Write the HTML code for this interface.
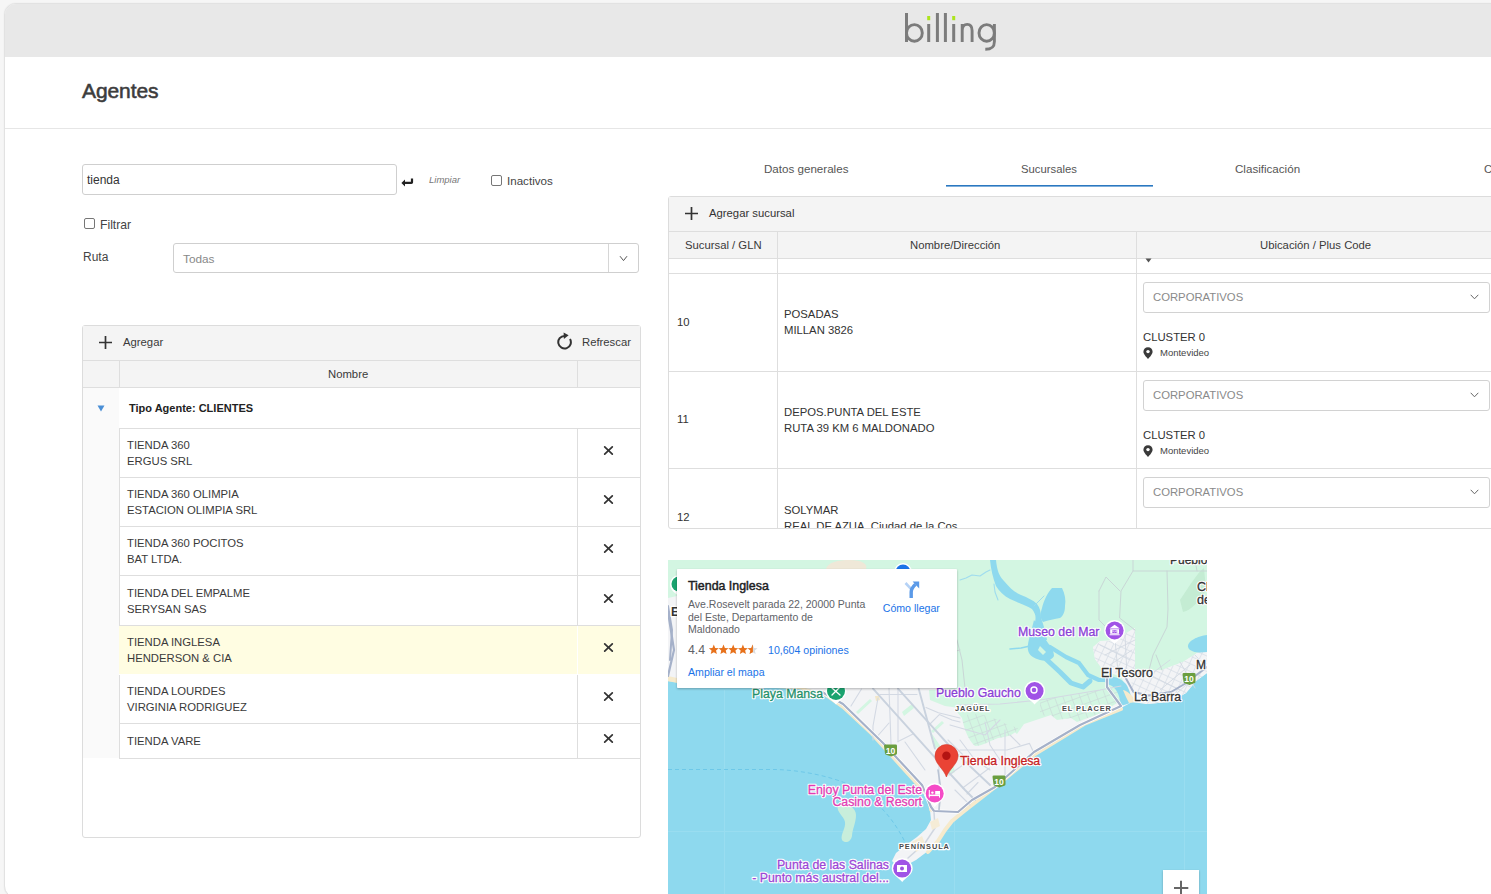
<!DOCTYPE html>
<html><head><meta charset="utf-8">
<style>
*{box-sizing:border-box;margin:0;padding:0}
html,body{width:1491px;height:894px;overflow:hidden;background:#f6f6f6;font-family:"Liberation Sans",sans-serif;color:#3a3a3a}
.a{position:absolute}
#frame{position:absolute;left:4px;top:3px;width:1500px;height:895px;background:#fff;border:1px solid #e2e2e2;border-radius:12px;overflow:hidden;box-shadow:0 0 1.5px rgba(0,0,0,0.08)}
#topbar{position:absolute;left:0;top:0;width:100%;height:53px;background:#e8e8e8}
#hline{position:absolute;left:0;top:124px;width:100%;height:1px;background:#e6e6e6}
.t12{font-size:11.3px;line-height:16px;white-space:nowrap}
.inp{border:1px solid #cfcfcf;border-radius:3px;background:#fff}
.cb{width:11px;height:11px;border:1px solid #767676;border-radius:2px;background:#fff}
.tbl{border:1px solid #dcdcdc;border-radius:3px;background:#fff;overflow:hidden}
.gl{background:#dedede}
</style></head><body>
<div id="frame">
  <div id="topbar"></div>
  <div id="hline"></div>
</div>
<!-- logo -->
<div class="a" style="left:904px;top:12px;width:94px;height:40px" id="logo"><svg style="position:absolute;left:-4px;top:-4px" width="100" height="48" viewBox="0 0 100 48"><g fill="#7c7c7c"><rect x="5" y="5" width="3" height="29"/><rect x="27.2" y="16" width="3" height="18"/><rect x="35.9" y="5" width="3" height="29"/><rect x="43.9" y="5" width="3" height="29"/><rect x="52.2" y="16" width="3" height="18"/></g><g fill="none" stroke="#7c7c7c" stroke-width="2.9"><ellipse cx="14.4" cy="24.9" rx="7.9" ry="8.3"/><path d="M62.2 34V16M62.2 22.8C62.2 18.6 64.4 16.4 67.2 16.4S72.1 18.6 72.1 22.8V34"/><ellipse cx="86.7" cy="24.9" rx="7.7" ry="8.3"/><path d="M94.4 16V33.5C94.4 39.6 91.2 41.3 85.3 41.3"/></g><g fill="#ace41c"><rect x="27.2" y="8" width="3" height="4.2"/><rect x="52.2" y="8" width="3" height="4.2"/></g></svg>
</div>

<div class="a" style="left:82px;top:79px;font-size:21px;color:#3c3c3c;-webkit-text-stroke:0.55px #3c3c3c;letter-spacing:-0.1px">Agentes</div>

<!-- search -->
<div class="a inp" style="left:82px;top:164px;width:315px;height:31px"></div>
<div class="a t12" style="left:87px;top:172px;color:#333;font-size:12px">tienda</div>
<svg class="a" style="left:401px;top:178px" width="13" height="9" viewBox="0 0 13 9"><path d="M0.4 4.9L4 1.4V3.7H9.9V0.4H12.1V4.3C12.1 5.3 11.4 6 10.4 6H4V8.4Z" fill="#222"/></svg>
<div class="a" style="left:429px;top:174px;font-size:9.5px;font-style:italic;color:#777">Limpiar</div>
<div class="a cb" style="left:491px;top:175px"></div>
<div class="a t12" style="left:507px;top:173px;color:#444;font-size:11.6px">Inactivos</div>

<div class="a cb" style="left:84px;top:218px"></div>
<div class="a t12" style="left:100px;top:217px;color:#444;font-size:12.2px">Filtrar</div>

<div class="a t12" style="left:83px;top:249px;color:#444;font-size:12px">Ruta</div>
<div class="a inp" style="left:173px;top:243px;width:466px;height:30px"></div>
<div class="a" style="left:608px;top:244px;width:1px;height:28px;background:#d6d6d6"></div>
<div class="a t12" style="left:183px;top:251px;color:#888;font-size:11.8px">Todas</div>
<svg class="a" style="left:619px;top:255px" width="9" height="7" viewBox="0 0 9 7"><path d="M1 1.2L4.5 5.6 8 1.2" fill="none" stroke="#555" stroke-width="1"/></svg>

<!-- left table -->
<div class="a tbl" style="left:82px;top:325px;width:559px;height:513px"></div>
<div class="a" style="left:83px;top:326px;width:557px;height:35px;background:#f4f4f4;border-bottom:1px solid #dedede"></div>
<div class="a" style="left:83px;top:361px;width:557px;height:27px;background:#f4f4f4;border-bottom:1px solid #dedede"></div>
<div class="a gl" style="left:119px;top:360px;width:1px;height:27px"></div>
<div class="a gl" style="left:577px;top:360px;width:1px;height:27px"></div>
<div class="a" style="left:83px;top:388px;width:36px;height:370px;background:#fafafa"></div>
<svg class="a" style="left:98px;top:335px" width="15" height="15" viewBox="0 0 15 15"><path d="M7.5 1v13M1 7.5h13" stroke="#333" stroke-width="1.7"/></svg>
<div class="a t12 tb" style="left:123px;top:334px">Agregar</div>
<svg class="a" style="left:556px;top:332px" width="17" height="18" viewBox="0 0 17 18"><path d="M8.5 3.9A6.3 6.3 0 1 0 14 7" fill="none" stroke="#333" stroke-width="2"/><path d="M7.6 0.6L12.6 3.3 7.9 7z" fill="#333"/></svg>
<div class="a t12 tb" style="left:582px;top:334px">Refrescar</div>
<div class="a t12 tb" style="left:328px;top:366px">Nombre</div>
<svg class="a" style="left:97px;top:405px" width="8" height="7" viewBox="0 0 8 7"><path d="M0.5 0.5h7L4 6.5z" fill="#4a8fd6"/></svg>
<div class="a t12" style="left:129px;top:400px;font-weight:bold;font-size:11px;color:#222">Tipo Agente: CLIENTES</div>
<div class="a gl" style="left:119px;top:428px;width:521px;height:1px"></div>
<div class="a" style="left:120px;top:429px;width:520px;height:48px;background:#fff"></div>
<div class="a gl" style="left:119px;top:428px;width:1px;height:50px"></div>
<div class="a gl" style="left:577px;top:428px;width:1px;height:50px"></div>
<div class="a gl" style="left:119px;top:477px;width:521px;height:1px"></div>
<div class="a t12 rc" style="left:127px;top:437px">TIENDA 360<br>ERGUS SRL</div>
<svg class="a" style="left:603px;top:445.2px" width="11" height="11" viewBox="0 0 11 11"><path d="M1.7 1.9L9.3 9.1M9.3 1.9L1.7 9.1" stroke="#333" stroke-width="1.75" stroke-linecap="round"/></svg>
<div class="a" style="left:120px;top:478px;width:520px;height:48px;background:#fff"></div>
<div class="a gl" style="left:119px;top:477px;width:1px;height:50px"></div>
<div class="a gl" style="left:577px;top:477px;width:1px;height:50px"></div>
<div class="a gl" style="left:119px;top:526px;width:521px;height:1px"></div>
<div class="a t12 rc" style="left:127px;top:486px">TIENDA 360 OLIMPIA<br>ESTACION OLIMPIA SRL</div>
<svg class="a" style="left:603px;top:494.2px" width="11" height="11" viewBox="0 0 11 11"><path d="M1.7 1.9L9.3 9.1M9.3 1.9L1.7 9.1" stroke="#333" stroke-width="1.75" stroke-linecap="round"/></svg>
<div class="a" style="left:120px;top:527px;width:520px;height:48px;background:#fff"></div>
<div class="a gl" style="left:119px;top:526px;width:1px;height:50px"></div>
<div class="a gl" style="left:577px;top:526px;width:1px;height:50px"></div>
<div class="a gl" style="left:119px;top:575px;width:521px;height:1px"></div>
<div class="a t12 rc" style="left:127px;top:535px">TIENDA 360 POCITOS<br>BAT LTDA.</div>
<svg class="a" style="left:603px;top:543.2px" width="11" height="11" viewBox="0 0 11 11"><path d="M1.7 1.9L9.3 9.1M9.3 1.9L1.7 9.1" stroke="#333" stroke-width="1.75" stroke-linecap="round"/></svg>
<div class="a" style="left:120px;top:576px;width:520px;height:49px;background:#fff"></div>
<div class="a gl" style="left:119px;top:575px;width:1px;height:51px"></div>
<div class="a gl" style="left:577px;top:575px;width:1px;height:51px"></div>
<div class="a gl" style="left:119px;top:625px;width:521px;height:1px"></div>
<div class="a t12 rc" style="left:127px;top:585px">TIENDA DEL EMPALME<br>SERYSAN SAS</div>
<svg class="a" style="left:603px;top:592.7px" width="11" height="11" viewBox="0 0 11 11"><path d="M1.7 1.9L9.3 9.1M9.3 1.9L1.7 9.1" stroke="#333" stroke-width="1.75" stroke-linecap="round"/></svg>
<div class="a" style="left:119px;top:626px;width:521px;height:48px;background:#fffde2"></div>
<div class="a" style="left:577px;top:626px;width:1px;height:48px;background:#fff"></div>
<div class="a" style="left:119px;top:674px;width:521px;height:1px;background:#fff"></div>
<div class="a t12 rc" style="left:127px;top:634px">TIENDA INGLESA<br>HENDERSON &amp; CIA</div>
<svg class="a" style="left:603px;top:642.2px" width="11" height="11" viewBox="0 0 11 11"><path d="M1.7 1.9L9.3 9.1M9.3 1.9L1.7 9.1" stroke="#333" stroke-width="1.75" stroke-linecap="round"/></svg>
<div class="a" style="left:120px;top:675px;width:520px;height:48px;background:#fff"></div>
<div class="a gl" style="left:119px;top:675px;width:1px;height:49px"></div>
<div class="a gl" style="left:577px;top:675px;width:1px;height:49px"></div>
<div class="a gl" style="left:119px;top:723px;width:521px;height:1px"></div>
<div class="a t12 rc" style="left:127px;top:683px">TIENDA LOURDES<br>VIRGINIA RODRIGUEZ</div>
<svg class="a" style="left:603px;top:691.2px" width="11" height="11" viewBox="0 0 11 11"><path d="M1.7 1.9L9.3 9.1M9.3 1.9L1.7 9.1" stroke="#333" stroke-width="1.75" stroke-linecap="round"/></svg>
<div class="a" style="left:120px;top:724px;width:520px;height:34px;background:#fff"></div>
<div class="a gl" style="left:119px;top:723px;width:1px;height:36px"></div>
<div class="a gl" style="left:577px;top:723px;width:1px;height:36px"></div>
<div class="a gl" style="left:119px;top:758px;width:521px;height:1px"></div>
<div class="a t12 rc" style="left:127px;top:733px">TIENDA VARE</div>
<svg class="a" style="left:603px;top:733.2px" width="11" height="11" viewBox="0 0 11 11"><path d="M1.7 1.9L9.3 9.1M9.3 1.9L1.7 9.1" stroke="#333" stroke-width="1.75" stroke-linecap="round"/></svg>

<!-- tabs -->
<div class="a t12" style="left:764px;top:161px;color:#555;font-size:11.6px">Datos generales</div>
<div class="a t12" style="left:1021px;top:161px;color:#555">Sucursales</div>
<div class="a t12" style="left:1235px;top:161px;color:#555;font-size:11.6px">Clasificación</div>
<div class="a t12" style="left:1484px;top:161px;color:#555">C</div>
<div class="a" style="left:946px;top:185px;width:207px;height:1px;background:#2b78c0"></div><div class="a" style="left:946px;top:186px;width:207px;height:1px;background:#7eaedb"></div>

<!-- right table -->
<div class="a tbl" style="left:668px;top:196px;width:900px;height:333px"></div>
<div class="a" style="left:0;top:0;width:1491px;height:528px;overflow:hidden">
<div class="a" style="left:669px;top:197px;width:830px;height:61px;background:#f4f4f4"></div>
<div class="a" style="left:669px;top:231px;width:830px;height:1px;background:#dedede"></div>
<div class="a" style="left:669px;top:258px;width:830px;height:1px;background:#dedede"></div>
<div class="a" style="left:777px;top:232px;width:1px;height:26px;background:#dedede"></div>
<div class="a" style="left:1136px;top:232px;width:1px;height:26px;background:#dedede"></div>
<svg class="a" style="left:684px;top:206px" width="15" height="15" viewBox="0 0 15 15"><path d="M7.5 1v13M1 7.5h13" stroke="#333" stroke-width="1.7"/></svg>
<div class="a t12" style="left:709px;top:205px;color:#333">Agregar sucursal</div>
<div class="a t12" style="left:685px;top:237px;color:#3a3a3a">Sucursal / GLN</div>
<div class="a t12" style="left:910px;top:237px;color:#3a3a3a">Nombre/Dirección</div>
<div class="a t12" style="left:1260px;top:237px;color:#3a3a3a">Ubicación / Plus Code</div>
<div class="a" style="left:777px;top:258px;width:1px;height:270px;background:#dedede"></div>
<div class="a" style="left:1136px;top:258px;width:1px;height:270px;background:#dedede"></div>
<div class="a" style="left:669px;top:273px;width:830px;height:1px;background:#dedede"></div>
<svg class="a" style="left:1145px;top:258px" width="7" height="5" viewBox="0 0 7 5"><path d="M0.5 0.5h6L3.5 4.5z" fill="#555"/></svg>
<div class="a" style="left:669px;top:371px;width:830px;height:1px;background:#dedede"></div>
<div class="a t12" style="left:677px;top:314px;color:#333">10</div>
<div class="a t12" style="left:784px;top:306px;color:#333">POSADAS<br>MILLAN 3826</div>
<div class="a inp" style="left:1143px;top:282px;width:347px;height:31px;border-color:#d2d2d2"></div>
<div class="a t12" style="left:1153px;top:289px;color:#8a8a8a">CORPORATIVOS</div>
<svg class="a" style="left:1470px;top:294px" width="9" height="6" viewBox="0 0 9 6"><path d="M0.7 0.8L4.5 4.8 8.3 0.8" fill="none" stroke="#666" stroke-width="1"/></svg>
<div class="a t12" style="left:1143px;top:329px;color:#333">CLUSTER 0</div>
<svg class="a" style="left:1143px;top:347px" width="10" height="12" viewBox="0 0 10 12"><path d="M5 0.3C2.3 0.3 0.4 2.2 0.4 4.7 0.4 7.6 5 11.8 5 11.8S9.6 7.6 9.6 4.7C9.6 2.2 7.7 0.3 5 0.3z" fill="#3a3a3a"/><circle cx="5" cy="4.6" r="1.7" fill="#fff"/></svg>
<div class="a" style="left:1160px;top:346px;font-size:9.5px;line-height:14px;color:#444;white-space:nowrap">Montevideo</div>
<div class="a" style="left:669px;top:468px;width:830px;height:1px;background:#dedede"></div>
<div class="a t12" style="left:677px;top:411px;color:#333">11</div>
<div class="a t12" style="left:784px;top:404px;color:#333">DEPOS.PUNTA DEL ESTE<br>RUTA 39 KM 6 MALDONADO</div>
<div class="a inp" style="left:1143px;top:380px;width:347px;height:31px;border-color:#d2d2d2"></div>
<div class="a t12" style="left:1153px;top:387px;color:#8a8a8a">CORPORATIVOS</div>
<svg class="a" style="left:1470px;top:392px" width="9" height="6" viewBox="0 0 9 6"><path d="M0.7 0.8L4.5 4.8 8.3 0.8" fill="none" stroke="#666" stroke-width="1"/></svg>
<div class="a t12" style="left:1143px;top:427px;color:#333">CLUSTER 0</div>
<svg class="a" style="left:1143px;top:445px" width="10" height="12" viewBox="0 0 10 12"><path d="M5 0.3C2.3 0.3 0.4 2.2 0.4 4.7 0.4 7.6 5 11.8 5 11.8S9.6 7.6 9.6 4.7C9.6 2.2 7.7 0.3 5 0.3z" fill="#3a3a3a"/><circle cx="5" cy="4.6" r="1.7" fill="#fff"/></svg>
<div class="a" style="left:1160px;top:444px;font-size:9.5px;line-height:14px;color:#444;white-space:nowrap">Montevideo</div>
<div class="a t12" style="left:677px;top:509px;color:#333">12</div>
<div class="a t12" style="left:784px;top:502px;color:#333">SOLYMAR<br>REAL DE AZUA, Ciudad de la Cos</div>
<div class="a inp" style="left:1143px;top:477px;width:347px;height:31px;border-color:#d2d2d2"></div>
<div class="a t12" style="left:1153px;top:484px;color:#8a8a8a">CORPORATIVOS</div>
<svg class="a" style="left:1470px;top:489px" width="9" height="6" viewBox="0 0 9 6"><path d="M0.7 0.8L4.5 4.8 8.3 0.8" fill="none" stroke="#666" stroke-width="1"/></svg>
<div class="a t12" style="left:1143px;top:524px;color:#333">CLUSTER 0</div>
<svg class="a" style="left:1143px;top:542px" width="10" height="12" viewBox="0 0 10 12"><path d="M5 0.3C2.3 0.3 0.4 2.2 0.4 4.7 0.4 7.6 5 11.8 5 11.8S9.6 7.6 9.6 4.7C9.6 2.2 7.7 0.3 5 0.3z" fill="#3a3a3a"/><circle cx="5" cy="4.6" r="1.7" fill="#fff"/></svg>
<div class="a" style="left:1160px;top:541px;font-size:9.5px;line-height:14px;color:#444;white-space:nowrap">Montevideo</div>
</div>

<!-- map -->
<div class="a" style="left:668px;top:560px;width:539px;height:334px;background:#8fd9ec;overflow:hidden" id="map"><svg width="539" height="334" viewBox="668 560 539 334" style="position:absolute;left:0;top:0">
<rect x="668" y="560" width="539" height="334" fill="#8ed9ee"/>
<path d="M724.5 690V894M668 831.5H1207M954.5 820V894M1184.5 700V894" stroke="#9ee0f2" stroke-width="1" opacity="0.7"/>
<path d="M668 560 L1207 560 L1207 673 L1196 681 L1186 693 L1170 702 L1146 704 L1132 702 L1121 708 L1084 723 L1035 753 L995 786 L963 811 L952 820 L945 829 L938 840 L928 851 L916 860 L905 866 L897 866 L892 861 L896 853 L906 845 L917 837 L926 829 L931 820 L930 810 L928 797 L920 786 L900 764 L872 733 L843 706 L826 694 L800 687 L760 685 L720 683 L690 681 L668 679Z" fill="#f3f4f6"/>
<path d="M826 695 L843 707 L872 734 L900 765 L920 787 L929 798 L931 810" fill="none" stroke="#f6eacc" stroke-width="3.5" stroke-linejoin="round" stroke-linecap="round" />
<path d="M1121 709 L1084 724 L1035 754 L995 787 L963 812 L952 821 L945 830 L938 841 L928 852" fill="none" stroke="#f6eacc" stroke-width="4" stroke-linejoin="round" stroke-linecap="round" />
<path d="M668 680 L690 682 L720 684 L760 686 L800 688 L826 695" fill="none" stroke="#f6eacc" stroke-width="2.5" stroke-linejoin="round" stroke-linecap="round" />
<path d="M668 560 L1207 560 L1207 650 L1197 653 L1183 662 L1162 670 L1135 671 L1135 628 L1114 640 L1100 641 L1093 647 L1095 659 L1103 670 L1121 677 L1128 690 L1121 700 L1104 712 L1077 722 L1071 718 L1057 720 L1051 715 L1024 724 L1017 734 L1004 723 L986 733 L977 745 L966 723 L957 712 L957 690 L940 688 L940 569 L677 569 L677 597 L668 599Z" fill="#d3f6e2"/>
<defs><pattern id="grid" width="7" height="7" patternUnits="userSpaceOnUse" patternTransform="rotate(25)"><path d="M0 0.5H7M0.5 0V7" stroke="#d6dce5" stroke-width="0.7"/></pattern><pattern id="grid2" width="8" height="8" patternUnits="userSpaceOnUse" patternTransform="rotate(-20)"><path d="M0 0.5H8M0.5 0V8" stroke="#c9d6d6" stroke-width="0.6"/></pattern></defs>
<path d="M1040 700 L1100 690 L1120 686 L1121 700 L1104 712 L1077 722 L1071 718 L1057 720 L1051 715 L1040 716Z" fill="url(#grid2)"/>
<path d="M962 718 C966 712 985 712 1004 723 L1018 728 C1016 734 1008 737 998 738 C990 741 982 746 975 746 C968 740 964 728 962 718Z" fill="#d3f6e2"/>
<path d="M962 718 C966 712 985 712 1004 723 L1018 728 C1016 734 1008 737 998 738 C990 741 982 746 975 746 C968 740 964 728 962 718Z" fill="url(#grid2)"/>
<path d="M668 598 L677 596 L677 682 L668 680Z" fill="#f3f4f6"/>
<path d="M668 676 L677 678 L677 683 L668 681Z" fill="#f6eacc"/>
<path d="M668 606 L672 630 L670 660" fill="none" stroke="#a5b1c9" stroke-width="2" stroke-linejoin="round" stroke-linecap="round" />
<path d="M826 569 C828 562 838 560 850 560 C862 560 868 564 866 569Z" fill="#efe8d8"/>
<path d="M902 712 L912 704 L914 708 L904 716Z" fill="#d3f6e2"/>
<path d="M944 760 L950 752 L955 772 L948 776Z" fill="#d3f6e2"/>
<path d="M838 806 C845 803 856 806 856 815 C856 823 852 830 852 836 C851 842 845 844 842 840 C840 835 846 828 845 822 C844 816 836 812 838 806Z" fill="#c8eedb"/>
<path d="M668 769.5 L775 769.5 C800 770 830 776 850 785 C870 795 890 812 905 842" fill="none" stroke="#5fc1e6" stroke-width="1" stroke-dasharray="4 3" opacity="0.7"/>
<path d="M1093 647 L1100 642 L1114 640 L1135 628 L1135 675 L1125 675 L1103 670 L1095 659Z" fill="#f3f4f6"/>
<path d="M1135 671 L1162 670 L1183 662 L1197 653 L1207 650 L1207 673 L1196 681 L1186 693 L1170 702 L1146 704 L1136 700 L1130 688Z" fill="#f3f4f6"/>
<path d="M1093 647 L1100 642 L1114 640 L1135 628 L1135 675 L1125 675 L1103 670 L1095 659Z" fill="url(#grid)"/>
<path d="M1135 671 L1162 670 L1183 662 L1197 653 L1207 650 L1207 673 L1196 681 L1186 693 L1170 702 L1146 704 L1136 700 L1130 688Z" fill="url(#grid)"/>
<path d="M1207 635 C1198 636 1187 641 1188 647 C1190 653 1200 653 1207 652Z" fill="#8ed9ee"/>
<path d="M1180 600 C1190 585 1198 572 1204 568 L1206 590 C1200 600 1192 610 1183 612Z" fill="#c4ecd3"/>
<path d="M990 560 L996 560 C997 570 999 576 1004 581 C1010 588 1014 592 1021 595 C1028 598 1033 600 1037 604 C1040 608 1041 612 1041 618 C1043 624 1046 632 1047 640 L1032 640 C1031 632 1033 626 1035 622 C1036 618 1036 614 1032 609 C1026 605 1018 603 1010 599 C1004 596 999 591 996 586 C993 578 991 570 990 560Z" fill="#8ed9ee"/>
<path d="M1052 588 L1062 588 C1065 594 1066 600 1065 606 C1065 612 1063 616 1060 618 C1055 619 1048 620 1043 622 C1040 618 1040 614 1042 608 C1044 600 1048 592 1052 588Z" fill="#8ed9ee"/>
<path d="M1034 620 C1038 626 1044 634 1046 640 C1050 646 1054 650 1054 656 C1052 660 1046 662 1040 660 C1034 658 1029 656 1028 650 C1027 644 1030 636 1032 628Z" fill="#8ed9ee"/>
<path d="M1050 647 L1066 657 L1079 663 L1088 675 L1099 680 L1111 680 L1117 680 L1122 686 L1124 694 L1126 702" fill="none" stroke="#8ed9ee" stroke-width="4.2" stroke-linejoin="round" stroke-linecap="round" />
<path d="M1046 659 L1060 672 L1071 683 L1083 687 L1090 681" fill="none" stroke="#8ed9ee" stroke-width="5" stroke-linejoin="round" stroke-linecap="round" />
<path d="M1010 649 L1021 648 L1030 646" fill="none" stroke="#8ed9ee" stroke-width="1.6" stroke-linejoin="round" stroke-linecap="round" />
<path d="M1106 677 C1112 676 1120 677 1126 684 C1130 690 1131 697 1133 702 L1121 706 C1120 698 1118 690 1112 686 C1108 684 1104 683 1104 680Z" fill="#8ed9ee"/>
<path d="M1040 646 L1046 652 L1043 655 L1038 650Z" fill="#d3f6e2"/>
<path d="M960 580 L966 578 L972 575 L980 576 L986 572 L990 570" fill="none" stroke="#9fdcee" stroke-width="1.1" stroke-linejoin="round" stroke-linecap="round" />
<path d="M994 584 L995 592 L998 600" fill="none" stroke="#9fdcee" stroke-width="1.1" stroke-linejoin="round" stroke-linecap="round" />
<path d="M1034 606 L1040 600 L1044 596" fill="none" stroke="#9fdcee" stroke-width="1" stroke-linejoin="round" stroke-linecap="round" />
<path d="M856 712 L870 699 L872 701 L858 714Z M931 731 L942 721 L944 723 L933 733Z M930 731 L941 747 L934 748Z M929 690 L960 690 L960 708 L945 706 L930 700Z" fill="#d3f6e2"/>
<path d="M875 696 L879 696 L880 700 L876 701Z" fill="#f3e7c8"/>
<path d="M889 688 L891 744" fill="none" stroke="#d3d9e3" stroke-width="1.1" stroke-linejoin="round" stroke-linecap="round" />
<path d="M898 688 L898 742" fill="none" stroke="#d3d9e3" stroke-width="1.1" stroke-linejoin="round" stroke-linecap="round" />
<path d="M878 698 L873 726 L873 740" fill="none" stroke="#d3d9e3" stroke-width="1.1" stroke-linejoin="round" stroke-linecap="round" />
<path d="M880 694.5 L917 694.5" fill="none" stroke="#d3d9e3" stroke-width="1.1" stroke-linejoin="round" stroke-linecap="round" />
<path d="M851 706 L861.5 689" fill="none" stroke="#d3d9e3" stroke-width="1.1" stroke-linejoin="round" stroke-linecap="round" />
<path d="M878.5 735 L889 723" fill="none" stroke="#d3d9e3" stroke-width="1.1" stroke-linejoin="round" stroke-linecap="round" />
<path d="M898 741.5 L912.5 734.3" fill="none" stroke="#d3d9e3" stroke-width="1.1" stroke-linejoin="round" stroke-linecap="round" />
<path d="M929.5 724.5 L939.3 714.6 L952 720 L960 722" fill="none" stroke="#d3d9e3" stroke-width="1.1" stroke-linejoin="round" stroke-linecap="round" />
<path d="M926 707.5 L938.4 712.8 L960 718" fill="none" stroke="#d3d9e3" stroke-width="1.1" stroke-linejoin="round" stroke-linecap="round" />
<path d="M949 775 L967 762" fill="none" stroke="#d3d9e3" stroke-width="1.1" stroke-linejoin="round" stroke-linecap="round" />
<path d="M962.6 788 L989.5 768" fill="none" stroke="#d3d9e3" stroke-width="1.1" stroke-linejoin="round" stroke-linecap="round" />
<path d="M948 740 L962.6 754.5" fill="none" stroke="#d3d9e3" stroke-width="1.1" stroke-linejoin="round" stroke-linecap="round" />
<path d="M939 766 L939 809" fill="none" stroke="#d3d9e3" stroke-width="1.1" stroke-linejoin="round" stroke-linecap="round" />
<path d="M967 794 L978 782.5" fill="none" stroke="#d3d9e3" stroke-width="1.1" stroke-linejoin="round" stroke-linecap="round" />
<path d="M960 740 L975 760 L990 770" fill="none" stroke="#d3d9e3" stroke-width="1.1" stroke-linejoin="round" stroke-linecap="round" />
<path d="M985 722 L990 745 L1000 760" fill="none" stroke="#d3d9e3" stroke-width="1.1" stroke-linejoin="round" stroke-linecap="round" />
<path d="M1010 735 L1020 745" fill="none" stroke="#d3d9e3" stroke-width="1.1" stroke-linejoin="round" stroke-linecap="round" />
<path d="M950 725 L985 735 L1000 720" fill="none" stroke="#d3d9e3" stroke-width="1.1" stroke-linejoin="round" stroke-linecap="round" />
<path d="M958 705 L1000 704 L1040 700 L1100 690 L1121 686" fill="none" stroke="#d3d9e3" stroke-width="1.1" stroke-linejoin="round" stroke-linecap="round" />
<path d="M905 742 L925 770" fill="none" stroke="#d3d9e3" stroke-width="1.1" stroke-linejoin="round" stroke-linecap="round" />
<path d="M955 790 L970 805" fill="none" stroke="#d3d9e3" stroke-width="1.1" stroke-linejoin="round" stroke-linecap="round" />
<path d="M960 750 L1007 750 L1029.5 743.4 L1033 751" fill="none" stroke="#d3d9e3" stroke-width="1.1" stroke-linejoin="round" stroke-linecap="round" />
<path d="M1005 730 L1005 775" fill="none" stroke="#d3d9e3" stroke-width="1.1" stroke-linejoin="round" stroke-linecap="round" />
<path d="M941 811 L959 811.7" fill="none" stroke="#d3d9e3" stroke-width="1.1" stroke-linejoin="round" stroke-linecap="round" />
<path d="M873 688.7 L935 757.6 L965 790 L975 800" fill="none" stroke="#c9d2de" stroke-width="1.9" stroke-linejoin="round" stroke-linecap="round" />
<path d="M898 688.7 L929.5 723.6 L955 752 L990 785" fill="none" stroke="#c9d2de" stroke-width="1.9" stroke-linejoin="round" stroke-linecap="round" />
<path d="M918.7 688.7 L934.9 748.6" fill="none" stroke="#c9d2de" stroke-width="1.9" stroke-linejoin="round" stroke-linecap="round" />
<path d="M1100 645 L1130 660" fill="none" stroke="#d3d9e2" stroke-width="0.9" stroke-linejoin="round" stroke-linecap="round" />
<path d="M1105 655 L1135 640" fill="none" stroke="#d3d9e2" stroke-width="0.9" stroke-linejoin="round" stroke-linecap="round" />
<path d="M1110 665 L1132 650" fill="none" stroke="#d3d9e2" stroke-width="0.9" stroke-linejoin="round" stroke-linecap="round" />
<path d="M1115 640 L1118 672" fill="none" stroke="#d3d9e2" stroke-width="0.9" stroke-linejoin="round" stroke-linecap="round" />
<path d="M1125 635 L1127 675" fill="none" stroke="#d3d9e2" stroke-width="0.9" stroke-linejoin="round" stroke-linecap="round" />
<path d="M1140 670 L1180 690" fill="none" stroke="#d3d9e2" stroke-width="0.9" stroke-linejoin="round" stroke-linecap="round" />
<path d="M1150 675 L1170 660" fill="none" stroke="#d3d9e2" stroke-width="0.9" stroke-linejoin="round" stroke-linecap="round" />
<path d="M1160 690 L1190 665" fill="none" stroke="#d3d9e2" stroke-width="0.9" stroke-linejoin="round" stroke-linecap="round" />
<path d="M1175 695 L1200 672" fill="none" stroke="#d3d9e2" stroke-width="0.9" stroke-linejoin="round" stroke-linecap="round" />
<path d="M1180 662 L1195 688" fill="none" stroke="#d3d9e2" stroke-width="0.9" stroke-linejoin="round" stroke-linecap="round" />
<path d="M1195 655 L1207 668" fill="none" stroke="#d3d9e2" stroke-width="0.9" stroke-linejoin="round" stroke-linecap="round" />
<path d="M1133 560 L1133 571 L1207 571" fill="none" stroke="#c9d6d6" stroke-width="1" stroke-linejoin="round" stroke-linecap="round" />
<path d="M1133 571 L1121 591 L1119.6 618 L1135 630" fill="none" stroke="#c9d6d6" stroke-width="1" stroke-linejoin="round" stroke-linecap="round" />
<path d="M1167 571 L1168 609 L1167 627 L1153 655 L1149 670" fill="none" stroke="#c9d6d6" stroke-width="1" stroke-linejoin="round" stroke-linecap="round" />
<path d="M1099 591 L1106 577 L1120 591" fill="none" stroke="#c9d6d6" stroke-width="1" stroke-linejoin="round" stroke-linecap="round" />
<path d="M1099 591 L1099 620 L1105 626" fill="none" stroke="#c9d6d6" stroke-width="1" stroke-linejoin="round" stroke-linecap="round" />
<path d="M1156 655 L1162 670" fill="none" stroke="#c9d6d6" stroke-width="1" stroke-linejoin="round" stroke-linecap="round" />
<path d="M957 640 L962 660 L965 688" fill="none" stroke="#c9d6d6" stroke-width="1" stroke-linejoin="round" stroke-linecap="round" />
<path d="M940 655 L960 650" fill="none" stroke="#c9d6d6" stroke-width="1" stroke-linejoin="round" stroke-linecap="round" />
<path d="M1195 560 L1197 571" fill="none" stroke="#c9d6d6" stroke-width="1" stroke-linejoin="round" stroke-linecap="round" />
<path d="M1123 690 C1128 691 1133 696 1136 702 L1129 703 C1127 699 1125 695 1123 690Z" fill="#f6eacc"/>
<path d="M668 612 L674 650 L668 676" fill="none" stroke="#a5b1c9" stroke-width="2.2" stroke-linejoin="round" stroke-linecap="round" />
<path d="M822 692 L843 704 L883 743 L922 785 L931 807 L934 811 L958 812 L972 800 L995 787 L1034 752 L1080 725 L1121 706 L1107 687 L1107 679" fill="none" stroke="#ffffff" stroke-width="3.6" stroke-linejoin="round" stroke-linecap="round" />
<path d="M822 692 L843 704 L883 743 L922 785 L931 807 L934 811 L958 812 L972 800 L995 787 L1034 752 L1080 725 L1121 706 L1107 687 L1107 679" fill="none" stroke="#a5b1c9" stroke-width="2.2" stroke-linejoin="round" stroke-linecap="round" />
<path d="M1126 678.5 L1133.5 692 L1148.7 695.5 L1171 692 L1184.5 684 L1207 667" fill="none" stroke="#a5b1c9" stroke-width="2" stroke-linejoin="round" stroke-linecap="round" />
<path d="M934 812 L935 828 L925 843 L908 858" fill="none" stroke="#d0d6e0" stroke-width="1.5" stroke-linejoin="round" stroke-linecap="round" />
<path d="M912 842 L922 836 L926 846 L916 852Z M930 822 L938 818 L940 826 L932 830Z" fill="#f5ecd6"/>
<path d="M938 770 L941 790 L939 810" fill="none" stroke="#b9c3d3" stroke-width="1.6" stroke-linejoin="round" stroke-linecap="round" />
<path d="M884.0 745.7 q0 -1.3 1.3 -1.3 h10.4 q1.3 0 1.3 1.3 v7.5 q0 1.2 -1.2 1.6 l-4.2 1.5 q-0.6 0.3 -1.2 0 l-4.2 -1.5 q-1.2 -0.4 -1.2 -1.6z" fill="#6a9e3f"/>
<text x="890.5" y="753.8" font-family="Liberation Sans" font-weight="bold" font-size="8.6" fill="#fff" text-anchor="middle">10</text>
<path d="M992.5 776.7 q0 -1.3 1.3 -1.3 h10.4 q1.3 0 1.3 1.3 v7.5 q0 1.2 -1.2 1.6 l-4.2 1.5 q-0.6 0.3 -1.2 0 l-4.2 -1.5 q-1.2 -0.4 -1.2 -1.6z" fill="#6a9e3f"/>
<text x="999" y="784.8" font-family="Liberation Sans" font-weight="bold" font-size="8.6" fill="#fff" text-anchor="middle">10</text>
<path d="M1182.5 674.2 q0 -1.3 1.3 -1.3 h10.4 q1.3 0 1.3 1.3 v7.5 q0 1.2 -1.2 1.6 l-4.2 1.5 q-0.6 0.3 -1.2 0 l-4.2 -1.5 q-1.2 -0.4 -1.2 -1.6z" fill="#6a9e3f"/>
<text x="1189" y="682.3" font-family="Liberation Sans" font-weight="bold" font-size="8.6" fill="#fff" text-anchor="middle">10</text>
<text x="752" y="698" font-family="Liberation Sans" font-size="12.3" font-weight="normal" fill="#23906a" text-anchor="start" letter-spacing="0" stroke="#fff" stroke-width="2.5" stroke-linejoin="round">Playa Mansa</text>
<text x="752" y="698" font-family="Liberation Sans" font-size="12.3" font-weight="normal" fill="#23906a" text-anchor="start" letter-spacing="0" stroke="#23906a" stroke-width="0.3">Playa Mansa</text>
<text x="936" y="697" font-family="Liberation Sans" font-size="12.3" font-weight="normal" fill="#8a3fd6" text-anchor="start" letter-spacing="0" stroke="#fff" stroke-width="2.5" stroke-linejoin="round">Pueblo Gaucho</text>
<text x="936" y="697" font-family="Liberation Sans" font-size="12.3" font-weight="normal" fill="#8a3fd6" text-anchor="start" letter-spacing="0" stroke="#8a3fd6" stroke-width="0.3">Pueblo Gaucho</text>
<text x="1018" y="636" font-family="Liberation Sans" font-size="12.3" font-weight="normal" fill="#8a3fd6" text-anchor="start" letter-spacing="0" stroke="#fff" stroke-width="2.5" stroke-linejoin="round">Museo del Mar</text>
<text x="1018" y="636" font-family="Liberation Sans" font-size="12.3" font-weight="normal" fill="#8a3fd6" text-anchor="start" letter-spacing="0" stroke="#8a3fd6" stroke-width="0.3">Museo del Mar</text>
<text x="1101" y="677" font-family="Liberation Sans" font-size="12.5" font-weight="normal" fill="#333" text-anchor="start" letter-spacing="0" stroke="#fff" stroke-width="2.5" stroke-linejoin="round">El Tesoro</text>
<text x="1101" y="677" font-family="Liberation Sans" font-size="12.5" font-weight="normal" fill="#333" text-anchor="start" letter-spacing="0" stroke="#333" stroke-width="0.3">El Tesoro</text>
<text x="1134" y="701" font-family="Liberation Sans" font-size="12.3" font-weight="normal" fill="#333" text-anchor="start" letter-spacing="0" stroke="#fff" stroke-width="2.5" stroke-linejoin="round">La Barra</text>
<text x="1134" y="701" font-family="Liberation Sans" font-size="12.3" font-weight="normal" fill="#333" text-anchor="start" letter-spacing="0" stroke="#333" stroke-width="0.3">La Barra</text>
<text x="955" y="711" font-family="Liberation Sans" font-size="7.4" font-weight="bold" fill="#4a4a4a" text-anchor="start" letter-spacing="0.9" stroke="#fff" stroke-width="2.5" stroke-linejoin="round">JAGÜEL</text>
<text x="955" y="711" font-family="Liberation Sans" font-size="7.4" font-weight="bold" fill="#4a4a4a" text-anchor="start" letter-spacing="0.9" stroke="#4a4a4a" stroke-width="0">JAGÜEL</text>
<text x="1062" y="711" font-family="Liberation Sans" font-size="7.4" font-weight="bold" fill="#4a4a4a" text-anchor="start" letter-spacing="0.9" stroke="#fff" stroke-width="2.5" stroke-linejoin="round">EL PLACER</text>
<text x="1062" y="711" font-family="Liberation Sans" font-size="7.4" font-weight="bold" fill="#4a4a4a" text-anchor="start" letter-spacing="0.9" stroke="#4a4a4a" stroke-width="0">EL PLACER</text>
<text x="899" y="849" font-family="Liberation Sans" font-size="7.4" font-weight="bold" fill="#4a4a4a" text-anchor="start" letter-spacing="0.9" stroke="#fff" stroke-width="2.5" stroke-linejoin="round">PENÍNSULA</text>
<text x="899" y="849" font-family="Liberation Sans" font-size="7.4" font-weight="bold" fill="#4a4a4a" text-anchor="start" letter-spacing="0.9" stroke="#4a4a4a" stroke-width="0">PENÍNSULA</text>
<text x="960" y="765" font-family="Liberation Sans" font-size="12.3" font-weight="normal" fill="#c5221f" text-anchor="start" letter-spacing="0" stroke="#fff" stroke-width="2.5" stroke-linejoin="round">Tienda Inglesa</text>
<text x="960" y="765" font-family="Liberation Sans" font-size="12.3" font-weight="normal" fill="#c5221f" text-anchor="start" letter-spacing="0" stroke="#c5221f" stroke-width="0.3">Tienda Inglesa</text>
<text x="922" y="794" font-family="Liberation Sans" font-size="12.3" font-weight="normal" fill="#e23cb3" text-anchor="end" letter-spacing="0" stroke="#fff" stroke-width="2.5" stroke-linejoin="round">Enjoy Punta del Este</text>
<text x="922" y="794" font-family="Liberation Sans" font-size="12.3" font-weight="normal" fill="#e23cb3" text-anchor="end" letter-spacing="0" stroke="#e23cb3" stroke-width="0.3">Enjoy Punta del Este</text>
<text x="922" y="806" font-family="Liberation Sans" font-size="12.3" font-weight="normal" fill="#e040b4" text-anchor="end" letter-spacing="0" stroke="#fff" stroke-width="2.5" stroke-linejoin="round">Casino &amp; Resort</text>
<text x="922" y="806" font-family="Liberation Sans" font-size="12.3" font-weight="normal" fill="#e040b4" text-anchor="end" letter-spacing="0" stroke="#e040b4" stroke-width="0.3">Casino &amp; Resort</text>
<text x="889" y="869" font-family="Liberation Sans" font-size="12.3" font-weight="normal" fill="#9b48d6" text-anchor="end" letter-spacing="0" stroke="#fff" stroke-width="2.5" stroke-linejoin="round">Punta de las Salinas</text>
<text x="889" y="869" font-family="Liberation Sans" font-size="12.3" font-weight="normal" fill="#9b48d6" text-anchor="end" letter-spacing="0" stroke="#9b48d6" stroke-width="0.3">Punta de las Salinas</text>
<text x="889" y="882" font-family="Liberation Sans" font-size="12.3" font-weight="normal" fill="#9b48d6" text-anchor="end" letter-spacing="0" stroke="#fff" stroke-width="2.5" stroke-linejoin="round">- Punto más austral del...</text>
<text x="889" y="882" font-family="Liberation Sans" font-size="12.3" font-weight="normal" fill="#9b48d6" text-anchor="end" letter-spacing="0" stroke="#9b48d6" stroke-width="0.3">- Punto más austral del...</text>
<text x="1170" y="564" font-family="Liberation Sans" font-size="12" font-weight="normal" fill="#333" text-anchor="start" letter-spacing="0" stroke="#fff" stroke-width="2.5" stroke-linejoin="round">Pueblo</text>
<text x="1170" y="564" font-family="Liberation Sans" font-size="12" font-weight="normal" fill="#333" text-anchor="start" letter-spacing="0" stroke="#333" stroke-width="0.3">Pueblo</text>
<text x="1197" y="590.5" font-family="Liberation Sans" font-size="12.5" font-weight="normal" fill="#333" text-anchor="start" letter-spacing="0" stroke="#fff" stroke-width="2.5" stroke-linejoin="round">Cl</text>
<text x="1197" y="590.5" font-family="Liberation Sans" font-size="12.5" font-weight="normal" fill="#333" text-anchor="start" letter-spacing="0" stroke="#333" stroke-width="0.3">Cl</text>
<text x="1197" y="603.5" font-family="Liberation Sans" font-size="12.5" font-weight="normal" fill="#333" text-anchor="start" letter-spacing="0" stroke="#fff" stroke-width="2.5" stroke-linejoin="round">de</text>
<text x="1197" y="603.5" font-family="Liberation Sans" font-size="12.5" font-weight="normal" fill="#333" text-anchor="start" letter-spacing="0" stroke="#333" stroke-width="0.3">de</text>
<text x="1196" y="669" font-family="Liberation Sans" font-size="12" font-weight="normal" fill="#333" text-anchor="start" letter-spacing="0" stroke="#fff" stroke-width="2.5" stroke-linejoin="round">M</text>
<text x="1196" y="669" font-family="Liberation Sans" font-size="12" font-weight="normal" fill="#333" text-anchor="start" letter-spacing="0" stroke="#333" stroke-width="0.3">M</text>
<text x="671" y="616" font-family="Liberation Sans" font-size="12" font-weight="bold" fill="#333" text-anchor="start" letter-spacing="0" stroke="#fff" stroke-width="2.5" stroke-linejoin="round">E</text>
<text x="671" y="616" font-family="Liberation Sans" font-size="12" font-weight="bold" fill="#333" text-anchor="start" letter-spacing="0" stroke="#333" stroke-width="0">E</text>
<path d="M825.5 691 A10.5 10.5 0 1 1 846.5 691 C846.5 697 840 700 836 704.5 C832 700 825.5 697 825.5 691Z" fill="#fff"/>
<circle cx="836" cy="691" r="9" fill="#1aa36f"/>
<path d="M832 688 L840 695" fill="none" stroke="#fff" stroke-width="1.3" stroke-linejoin="round" stroke-linecap="round" />
<path d="M840 687 L832 695" fill="none" stroke="#fff" stroke-width="1.3" stroke-linejoin="round" stroke-linecap="round" />
<path d="M1024.1 691 A10.5 10.5 0 1 1 1045.1 691 C1045.1 697 1038.6 700 1034.6 704.5 C1030.6 700 1024.1 697 1024.1 691Z" fill="#fff"/>
<circle cx="1034.6" cy="691" r="9" fill="#a052e6"/>
<circle cx="1034" cy="690" r="3" fill="none" stroke="#fff" stroke-width="1.4"/>
<path d="M1104.1 630.5 A10.5 10.5 0 1 1 1125.1 630.5 C1125.1 636.5 1118.6 639.5 1114.6 644.0 C1110.6 639.5 1104.1 636.5 1104.1 630.5Z" fill="#fff"/>
<circle cx="1114.6" cy="630.5" r="9" fill="#a052e6"/>
<path d="M1109.4 628.6 L1114.6 624.8 L1119.8 628.6Z M1110.2 629.2h8.8v4.6h-8.8z M1109.6 634.2h10v1h-10z" fill="#fff"/><path d="M1112 630.2h5.2v2.8h-5.2z" fill="#a052e6"/><path d="M1112.6 632.6v-2l2 1.4 2-1.4v2" fill="none" stroke="#fff" stroke-width="0.6"/>
<path d="M924.2 793.5 A10.5 10.5 0 1 1 945.2 793.5 C945.2 799.5 938.7 802.5 934.7 807.0 C930.7 802.5 924.2 799.5 924.2 793.5Z" fill="#fff"/>
<circle cx="934.7" cy="793.5" r="9" fill="#f54bc7"/>
<g fill="#fff"><rect x="928.8" y="790" width="1" height="7.5"/><rect x="928.8" y="794.6" width="11.2" height="1.5"/><rect x="935.2" y="791" width="4.8" height="3.6"/><rect x="939" y="794.6" width="1" height="3"/><circle cx="932.4" cy="792.6" r="1.2"/></g>
<path d="M891.7 868.6 A10.5 10.5 0 1 1 912.7 868.6 C912.7 874.6 906.2 877.6 902.2 882.1 C898.2 877.6 891.7 874.6 891.7 868.6Z" fill="#fff"/>
<circle cx="902.2" cy="868.6" r="9" fill="#a052e6"/>
<rect x="897" y="865" width="10" height="7" fill="#fff"/><circle cx="902" cy="868.5" r="2" fill="#9c52e0"/>
<path d="M670.0 584 A9.0 9.0 0 1 1 688.0 584 C688.0 590 683 593 679 596.0 C675 593 670.0 590 670.0 584Z" fill="#fff"/>
<circle cx="679" cy="584" r="7.5" fill="#1aa36f"/>
<path d="M894.0 572 A9.0 9.0 0 1 1 912.0 572 C912.0 578 907 581 903 584.0 C899 581 894.0 578 894.0 572Z" fill="#fff"/>
<circle cx="903" cy="572" r="7.5" fill="#1a73e8"/>
<path d="M946.4 777 C944 769 935 764 935 756 A11.5 11.5 0 0 1 958 756 C958 764 949 769 946.4 777Z" fill="#ea4335" stroke="#d33b2c" stroke-width="0.6"/>
<circle cx="946.4" cy="755.7" r="4.2" fill="#b31412"/>
<defs><filter id="sh" x="-10%" y="-10%" width="120%" height="130%"><feDropShadow dx="0" dy="1" stdDeviation="1.3" flood-color="#000" flood-opacity="0.28"/></filter></defs>
<rect x="1163" y="870" width="36" height="40" fill="#fff" filter="url(#sh)"/>
<path d="M1174 888H1188.3M1181 880.8V898" stroke="#666" stroke-width="2"/>
<rect x="677" y="569" width="280" height="119" rx="1" fill="#fff" filter="url(#sh)"/>
<text x="688" y="589.7" font-family="Liberation Sans" font-size="12.4" fill="#202124" stroke="#202124" stroke-width="0.45">Tienda Inglesa</text>
<text x="688" y="607.9" font-family="Liberation Sans" font-size="10.5" font-weight="normal" fill="#5f6368" text-anchor="start">Ave.Rosevelt parada 22, 20000 Punta</text>
<text x="688" y="620.5" font-family="Liberation Sans" font-size="10.5" font-weight="normal" fill="#5f6368" text-anchor="start">del Este, Departamento de</text>
<text x="688" y="633.1" font-family="Liberation Sans" font-size="10.5" font-weight="normal" fill="#5f6368" text-anchor="start">Maldonado</text>
<text x="688" y="654" font-family="Liberation Sans" font-size="12.3" font-weight="normal" fill="#5f6368" text-anchor="start">4.4</text>
<path d="M713.80 644.60 L715.18 647.91 L718.75 648.19 L716.03 650.52 L716.86 654.01 L713.80 652.14 L710.74 654.01 L711.57 650.52 L708.85 648.19 L712.42 647.91Z" fill="#e7711b"/>
<path d="M723.50 644.60 L724.88 647.91 L728.45 648.19 L725.73 650.52 L726.56 654.01 L723.50 652.14 L720.44 654.01 L721.27 650.52 L718.55 648.19 L722.12 647.91Z" fill="#e7711b"/>
<path d="M733.20 644.60 L734.58 647.91 L738.15 648.19 L735.43 650.52 L736.26 654.01 L733.20 652.14 L730.14 654.01 L730.97 650.52 L728.25 648.19 L731.82 647.91Z" fill="#e7711b"/>
<path d="M742.90 644.60 L744.28 647.91 L747.85 648.19 L745.13 650.52 L745.96 654.01 L742.90 652.14 L739.84 654.01 L740.67 650.52 L737.95 648.19 L741.52 647.91Z" fill="#e7711b"/>
<path d="M752.60 644.60 L753.98 647.91 L757.55 648.19 L754.83 650.52 L755.66 654.01 L752.60 652.14 L749.54 654.01 L750.37 650.52 L747.65 648.19 L751.22 647.91Z" fill="#dadce0"/>
<clipPath id="hs"><rect x="746.5999999999999" y="640" width="6.3" height="15"/></clipPath>
<g clip-path="url(#hs)">
<path d="M752.60 644.60 L753.98 647.91 L757.55 648.19 L754.83 650.52 L755.66 654.01 L752.60 652.14 L749.54 654.01 L750.37 650.52 L747.65 648.19 L751.22 647.91Z" fill="#e7711b"/>
</g>
<text x="768" y="654" font-family="Liberation Sans" font-size="10.6" font-weight="normal" fill="#1a73e8" text-anchor="start">10,604 opiniones</text>
<text x="688" y="675.6" font-family="Liberation Sans" font-size="10.6" font-weight="normal" fill="#1a73e8" text-anchor="start">Ampliar el mapa</text>
<text x="911.3" y="612" font-family="Liberation Sans" font-size="10.6" font-weight="normal" fill="#1a73e8" text-anchor="middle">Cómo llegar</text>
<path d="M905.5 583 L911 588.8" stroke="#b5d2f6" stroke-width="2.6"/>
<path d="M911.2 598V592C911.2 589 912.5 587 915.5 584.2" fill="none" stroke="#5b9ae8" stroke-width="3.4"/>
<path d="M912.6 581.6H919.2V588.4Z" fill="#5b9ae8"/>
</svg></div>
</body></html>
